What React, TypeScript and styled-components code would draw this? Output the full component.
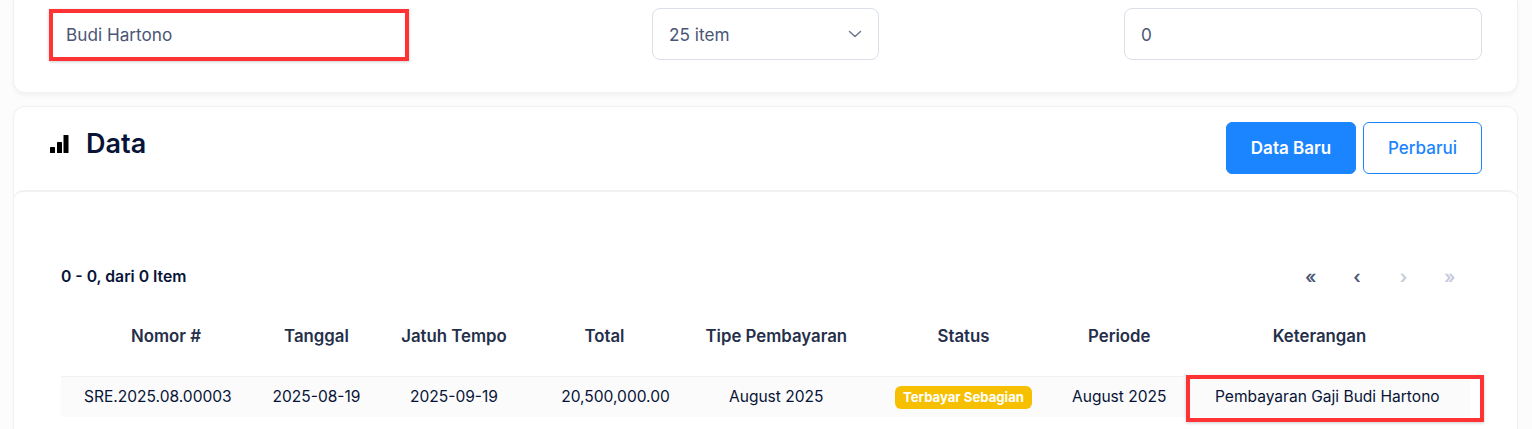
import React from "react";
import styled, { createGlobalStyle } from "styled-components";

const Global = createGlobalStyle`
  html, body { margin: 0; padding: 0; height: 429px; overflow: hidden; background: #fcfcfc; }
  * { box-sizing: border-box; }
  body { font-family: Inter, "Liberation Sans", sans-serif; color: #252f4a; }
`;

const Page = styled.div`
  display: flex;
  flex-direction: column;
  gap: 13px;
  padding: 0 14px 0 13px;
  height: 429px;
  overflow: hidden;
`;

const FilterCard = styled.section`
  flex: none;
  height: 93px;
  padding: 8px 35px 0;
  background: #fff;
  border: 1px solid #f1f1f4;
  border-top: 0;
  border-radius: 0 0 12px 12px;
  box-shadow: 0 3px 4px rgba(0, 0, 0, 0.04);
  display: flex;
  justify-content: space-between;
  align-items: flex-start;
`;

const Field = styled.div<{ $width: number; $marked?: boolean; $nudge?: number }>`
  width: ${(p) => p.$width}px;
  height: 52px;
  padding: 0 ${(p) => (p.$marked ? 13 : 16)}px ${(p) => (p.$marked ? 2 : 0)}px;
  margin-top: ${(p) => (p.$marked ? 1 : 0)}px;
  margin-right: ${(p) => p.$nudge ?? 0}px;
  display: flex;
  align-items: center;
  justify-content: space-between;
  background: #fff;
  font-size: 17.2px;
  color: #4b5675;
  border-radius: ${(p) => (p.$marked ? 0 : 8)}px;
  border: ${(p) => (p.$marked ? "4px solid #ff3333" : "1px solid #dbdfe9")};
  box-shadow: ${(p) => (p.$marked ? "0 1px 3px rgba(0,0,0,.2)" : "none")};
`;

const DataCard = styled.section`
  flex: 1;
  background: #fff;
  border: 1px solid #f1f1f4;
  border-bottom: 0;
  border-radius: 12px 12px 0 0;
  box-shadow: 0 0 2px rgba(0, 0, 0, 0.03);
`;

const DataHeader = styled.header`
  height: 83px;
  padding: 15px 35px 0 35px;
  display: flex;
  justify-content: space-between;
  align-items: flex-start;
`;

const TitleGroup = styled.div`
  display: flex;
  align-items: center;
  gap: 17px;
  height: 42px;
`;

const Title = styled.h2`
  margin: 0;
  font-size: 27px;
  font-weight: 600;
  color: #071437;
`;

const Actions = styled.div`
  display: flex;
  gap: 7px;
`;

const Button = styled.button<{ $solid?: boolean }>`
  height: 52px;
  width: ${(p) => (p.$solid ? 130 : 119)}px;
  font-family: Inter, "Liberation Sans", sans-serif;
  font-size: 17px;
  font-weight: ${(p) => (p.$solid ? 600 : 500)};
  border-radius: 6px;
  border: 1px solid #1b84ff;
  color: ${(p) => (p.$solid ? "#fff" : "#1b84ff")};
  background: ${(p) => (p.$solid ? "#1b84ff" : "#fff")};
`;

const Inner = styled.div`
  height: 240px;
  padding: 68px 0 0 47px;
  background: #fff;
  border-top: 2px solid #f1f1f4;
  border-left: 1px solid #f1f1f4;
  border-right: 1px solid #f1f1f4;
  border-radius: 10px 10px 0 0;
  margin: 0 -1px;
`;

const CountRow = styled.div`
  height: 32px;
  display: flex;
  justify-content: space-between;
  align-items: center;
  padding-right: 44px;
`;

const Count = styled.span`
  font-size: 15.75px;
  font-weight: 600;
  color: #071437;
`;

const Pager = styled.nav`
  display: flex;
`;

const PageBtn = styled.span<{ $off?: boolean }>`
  width: 46.4px;
  text-align: center;
  font-size: 18px;
  font-weight: 600;
  color: ${(p) => (p.$off ? "#c4cada" : "#4b5675")};
`;

const COLS = "210px 91px 184px 139px 182.5px 192px 119.5px 291px";

const HeadRow = styled.div`
  display: grid;
  grid-template-columns: ${COLS};
  height: 40px;
  margin-top: 24px;
  margin-bottom: 20px;
  align-items: center;
`;

const Th = styled.div<{ $pad?: number }>`
  text-align: center;
  font-size: 16.8px;
  font-weight: 600;
  color: #252f4a;
  padding-right: ${(p) => p.$pad ?? 0}px;
  white-space: nowrap;
`;

const BodyRow = styled.div`
  display: grid;
  grid-template-columns: ${COLS};
  width: 1409px;
  height: 41px;
  align-items: center;
  background: #fbfbfb;
  border-top: 1px solid #f1f1f4;
`;

const Td = styled.div<{ $left?: number }>`
  position: relative;
  text-align: ${(p) => (p.$left ? "left" : "center")};
  padding-left: ${(p) => p.$left ?? 0}px;
  padding-bottom: 2px;
  font-size: 15.55px;
  color: #071437;
  white-space: nowrap;
`;

const Badge = styled.span`
  display: block;
  width: fit-content;
  margin: 3px auto 0;
  padding: 0 8px;
  height: 23px;
  line-height: 23px;
  font-size: 13.15px;
  font-weight: 700;
  color: #fff;
  background: #f6c000;
  border-radius: 6px;
`;

const Marker = styled.span`
  position: absolute;
  left: 7px;
  right: -14px;
  top: -12px;
  bottom: -14px;
  border: 4px solid #ff3333;
  box-shadow: 0 1px 3px rgba(0, 0, 0, 0.2);
  pointer-events: none;
`;

const Bars = () => (
  <svg width="20" height="20" viewBox="0 0 20 20" fill="#000" aria-hidden="true">
    <rect x="1" y="14" width="5" height="6" rx="0.6" />
    <rect x="8" y="9" width="5" height="11" rx="0.6" />
    <rect x="14.5" y="2" width="5" height="18" rx="0.6" />
  </svg>
);

const Chevron = () => (
  <svg width="14" height="14" viewBox="0 0 14 14" fill="none" stroke="#6d7690" strokeWidth="1.5" strokeLinecap="round" strokeLinejoin="round" aria-hidden="true">
    <path d="M1.5 4.5 7 9.5l5.5-5" />
  </svg>
);

const heads: [string, number?][] = [
  ["Nomor #"], ["Tanggal"], ["Jatuh Tempo"], ["Total", 22],
  ["Tipe Pembayaran"], ["Status"], ["Periode"], ["Keterangan", 10],
];

export default function App() {
  return (
    <Page>
      <Global />
      <FilterCard>
        <Field $width={360} $marked>Budi Hartono</Field>
        <Field $width={227} $nudge={2}>25 item<Chevron /></Field>
        <Field $width={358}>0</Field>
      </FilterCard>
      <DataCard>
        <DataHeader>
          <TitleGroup>
            <Bars />
            <Title>Data</Title>
          </TitleGroup>
          <Actions>
            <Button $solid>Data Baru</Button>
            <Button>Perbarui</Button>
          </Actions>
        </DataHeader>
        <Inner>
          <CountRow>
            <Count>0 - 0, dari 0 Item</Count>
            <Pager>
              <PageBtn>«</PageBtn>
              <PageBtn>‹</PageBtn>
              <PageBtn $off>›</PageBtn>
              <PageBtn $off>»</PageBtn>
            </Pager>
          </CountRow>
          <HeadRow>
            {heads.map(([t, pad]) => <Th key={t} $pad={pad}>{t}</Th>)}
          </HeadRow>
          <BodyRow>
            <Td $left={23}>SRE.2025.08.00003</Td>
            <Td>2025-08-19</Td>
            <Td>2025-09-19</Td>
            <Td>20,500,000.00</Td>
            <Td>August 2025</Td>
            <Td><Badge>Terbayar Sebagian</Badge></Td>
            <Td>August 2025</Td>
            <Td $left={36}>Pembayaran Gaji Budi Hartono<Marker /></Td>
          </BodyRow>
        </Inner>
      </DataCard>
    </Page>
  );
}
